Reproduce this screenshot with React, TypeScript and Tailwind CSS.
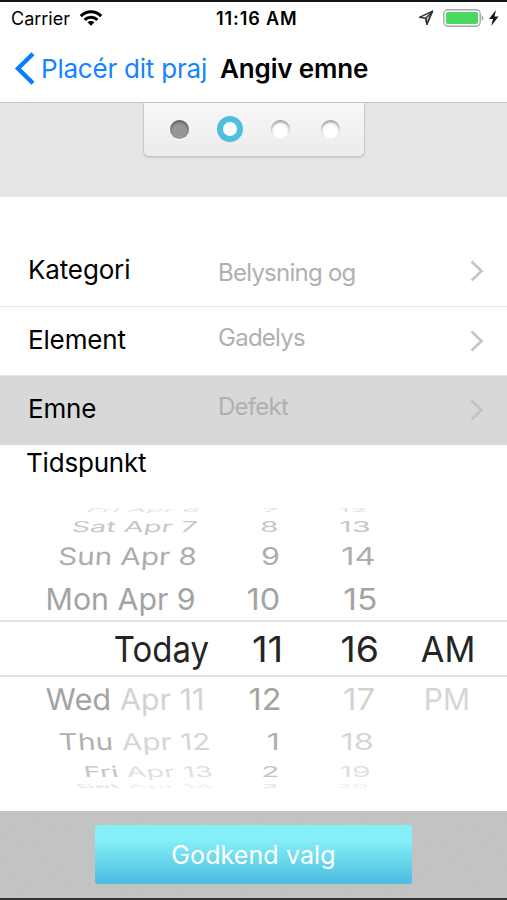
import React, { useState } from "react";

type Cell = { text: React.ReactNode; className: string };

type WheelRow = {
  row: string;
  day: Cell;
  hour: Cell;
  minute: Cell;
  period?: Cell;
};

// rows get flatter and lighter the further they are from the selected one
const wheelRows: WheelRow[] = [
  {
    row: "h-[14px] text-[26px] text-[#e2e2e2]",
    day: { text: "Fri Apr 6", className: "mr-[10px] -skew-x-12 scale-x-[1.07] scale-y-[0.2]" },
    hour: { text: "7", className: "mr-[5px] scale-x-[1.1] scale-y-[0.2]" },
    minute: { text: "12", className: "mr-[12px] scale-x-[1.1] scale-y-[0.2]" },
  },
  {
    row: "h-[18px] text-[27px] text-[#c6c6c6]",
    day: { text: "Sat Apr 7", className: "mr-[12px] -skew-x-6 scale-x-[1.07] scale-y-[0.56]" },
    hour: { text: "8", className: "mr-[5px] scale-x-[1.12] scale-y-[0.56]" },
    minute: { text: "13", className: "mr-[8px] scale-x-[1.14] scale-y-[0.56]" },
  },
  {
    row: "h-[42px] text-[29px] text-[#adadad]",
    day: { text: "Sun Apr 8", className: "mr-[12px] -skew-x-3 scale-x-[1.02] scale-y-[0.83]" },
    hour: { text: "9", className: "mr-[4px] scale-x-[1.05] scale-y-[0.83]" },
    minute: { text: "14", className: "mr-[3px] scale-x-[1.12] scale-y-[0.83]" },
  },
  {
    row: "h-[43px] text-[30px] text-[#a3a3a3]",
    day: { text: "Mon Apr 9", className: "mr-[13px] scale-x-[1.01]" },
    hour: { text: "10", className: "mr-[4px] scale-x-[1.08]" },
    minute: { text: "15", className: "mr-[2px] scale-x-[1.12]" },
  },
  {
    row: "h-[57px] border-y-2 border-[#e3e3e3] text-[36px] text-[#252525]",
    day: { text: "Today", className: "scale-x-[0.915]" },
    hour: { text: "11", className: "mr-px scale-x-[1.07]" },
    minute: { text: "16", className: "scale-x-[1.04]" },
    period: { text: "AM", className: "mr-px scale-x-[0.95]" },
  },
  {
    row: "h-[44px] text-[30px] text-[#a3a3a3]",
    day: { text: <>Wed <span className="text-[#d3d3d3]">Apr 11</span></>, className: "mr-[4px] skew-x-1 scale-x-[1.02]" },
    hour: { text: "12", className: "mr-[3px] scale-x-[1.08]" },
    minute: { text: "17", className: "mr-[4px] scale-x-[1.1] text-[#d3d3d3]" },
    period: { text: "PM", className: "mr-[6px] text-[#d6d6d6]" },
  },
  {
    row: "h-[40px] text-[29px] text-[#b0b0b0]",
    day: { text: <>Thu <span className="text-[#d6d6d6]">Apr 12</span></>, className: "mr-[-1px] skew-x-3 scale-x-[1.03] scale-y-[0.8]" },
    hour: { text: "1", className: "mr-[4px] scale-x-[1.1] scale-y-[0.8]" },
    minute: { text: "18", className: "mr-[5px] scale-x-[1.12] scale-y-[0.8] text-[#d6d6d6]" },
  },
  {
    row: "h-[20px] text-[27px] text-[#c4c4c4]",
    day: { text: <>Fri <span className="text-[#e0e0e0]">Apr 13</span></>, className: "mr-[-3px] skew-x-6 scale-x-[1.07] scale-y-[0.55]" },
    hour: { text: "2", className: "mr-[5px] scale-x-[1.1] scale-y-[0.55]" },
    minute: { text: "19", className: "mr-[8px] scale-x-[1.12] scale-y-[0.55] text-[#e0e0e0]" },
  },
  {
    row: "h-[10px] text-[26px] text-[#e0e0e0]",
    day: { text: <>Sat <span className="text-[#f0f0f0]">Apr 14</span></>, className: "mr-[-3px] skew-x-12 scale-x-[1.09] scale-y-[0.2]" },
    hour: { text: "3", className: "mr-[6px] scale-x-[1.05] scale-y-[0.2]" },
    minute: { text: "20", className: "mr-[10px] scale-y-[0.2] text-[#f0f0f0]" },
  },
];

const fields = [
  { label: "Kategori", value: "Belysning og", rowClass: "h-[70px]", valueClass: "pt-[3px]" },
  { label: "Element", value: "Gadelys", rowClass: "h-[69px]", valueClass: "pb-[6px]" },
  { label: "Emne", value: "Defekt", rowClass: "h-[69px]", valueClass: "pb-[6px]" },
];

const WheelCell = ({ cell, width }: { cell?: Cell; width: string }) => (
  <div className={`flex shrink-0 justify-end ${width}`}>
    {cell && <span className={`block origin-right whitespace-pre ${cell.className}`}>{cell.text}</span>}
  </div>
);

const StatusBar = () => (
  <div className="flex h-[34px] items-center border-t-2 border-[#161616] pt-px text-[18px] leading-none">
    <span className="w-[69px] shrink-0 pl-[11px]">Carrier</span>
    <svg className="mb-[2px] ml-[10px] shrink-0" width="24" height="16" viewBox="0 0 24 16" fill="none" stroke="#000" strokeWidth="3">
      <path d="M1.8 6.1C7.4.4 16.6.4 22.2 6.1" />
      <path d="M5.6 9.9c3.6-3.6 9.2-3.6 12.8 0" />
      <path d="M12 15.7l-3.5-3.4c2-1.9 5-1.9 7 0z" fill="#000" stroke="none" />
    </svg>
    <span className="ml-[113px] w-[86px] font-semibold tracking-[0.9px] whitespace-nowrap">11:16 AM</span>
    <svg className="mb-[2px] ml-auto shrink-0" width="16" height="16" viewBox="0 0 16 16" fill="none" stroke="#333" strokeWidth="1.4" strokeLinejoin="round">
      <path d="M14.5 1.2L1.5 7.3l6.2 1 1.2 6z" />
      <path d="M14.5 1.2L7.7 8.3l1.2 6z" fill="#333" fillOpacity=".25" />
    </svg>
    <svg className="mr-[8px] mb-[2px] ml-[9px] shrink-0" width="56" height="18" viewBox="0 0 56 18">
      <rect x=".8" y=".8" width="36.4" height="16.4" rx="4" fill="#fff" stroke="#a6a6a6" strokeWidth="1.4" />
      <rect x="3" y="3" width="32" height="12" rx="1.8" fill="#4bd763" />
      <path d="M38.7 6.3c2.3.9 2.3 4.5 0 5.4z" fill="#a6a6a6" />
      <path d="M53 1l-7 9h4l-1.8 7 7.3-9.500h-4.100z" fill="#111" />
    </svg>
  </div>
);

const StepTab = () => (
  <div className="flex h-[54px] w-[222px] items-center justify-between rounded-b-[6px] border border-t-0 border-[#c9c9c9] bg-linear-to-b from-[#f8f8f8] to-[#ebebeb] pr-[20px] pb-px pl-[23px] shadow-[0_1px_1px_rgba(0,0,0,0.12)]">
    <span className="mx-[3px] size-[19px] rounded-full bg-[#969696] shadow-[inset_0_2px_3px_rgba(0,0,0,0.4),0_1px_0_#fff]" />
    <span className="size-[26px] rounded-full border-[6.5px] border-[#4fbfdf] bg-white" />
    <span className="mx-[3px] size-[19px] rounded-full bg-white shadow-[inset_0_2px_3px_rgba(0,0,0,0.42)]" />
    <span className="mx-[3px] size-[19px] rounded-full bg-white shadow-[inset_0_2px_3px_rgba(0,0,0,0.42)]" />
  </div>
);

const App = () => {
  const [selected, setSelected] = useState(2);

  return (
    <div className="flex h-[900px] w-[507px] flex-col overflow-hidden bg-white font-['Inter',sans-serif] text-black">
      <StatusBar />

      {/* Navigation bar */}
      <div className="flex h-[69px] items-center border-b border-[#c4c4c4] pt-px text-[26px] leading-none">
        <svg className="ml-[14px] shrink-0" width="21" height="33" viewBox="0 0 21 33" fill="none" stroke="#087dff" strokeWidth="4.4">
          <path d="M19 1.8L4 16.5 19 31.2" />
        </svg>
        <span className="ml-[6px] w-[179px] tracking-[-0.22px] whitespace-nowrap text-[#1683ff]">Placér dit praj</span>
        <h1 className="font-semibold tracking-[-0.15px] whitespace-nowrap">Angiv emne</h1>
      </div>

      {/* Step indicator */}
      <div className="flex h-[94px] items-start justify-center bg-[#e5e5e5]">
        <StepTab />
      </div>

      {/* Fields */}
      <div className="pt-[40px]">
        {fields.map((field, i) => (
          <button
            key={field.label}
            onClick={() => setSelected(i)}
            className={`flex w-full items-center border-b text-left leading-none ${field.rowClass} ${
              selected === i ? "border-[#d8d8d8] bg-[#d8d8d8]" : "border-[#e6e6e6]"
            }`}
          >
            <span className="w-[218px] pb-[3px] pl-[28px] text-[26px] tracking-[-0.15px]">{field.label}</span>
            <span className={`grow text-[24px] tracking-[-0.75px] text-[#b0b0b0] ${field.valueClass}`}>{field.value}</span>
            <svg className="mr-[23px] mb-px" width="14" height="22" viewBox="0 0 14 22" fill="none" stroke={selected === i ? "#c2c2c2" : "#c5c5c9"} strokeWidth="2.6">
              <path d="M1.5 1.5L11.5 11l-10 9.5" />
            </svg>
          </button>
        ))}
      </div>

      <h2 className="h-[58px] pt-[4px] pl-[26px] text-[26px] leading-[28px] tracking-[-0.2px]">Tidspunkt</h2>

      {/* Date wheel */}
      <div className="h-[308px]">
        {wheelRows.map((r, i) => (
          <div key={i} className={`flex items-center leading-none ${r.row}`}>
            <WheelCell cell={r.day} width="w-[209px]" />
            <WheelCell cell={r.hour} width="w-[75px]" />
            <WheelCell cell={r.minute} width="w-[95px]" />
            <WheelCell cell={r.period} width="w-[97px]" />
          </div>
        ))}
      </div>

      {/* Footer */}
      <div className="flex grow items-center justify-center border-b-2 border-[#333] bg-[#c4c4c4] bg-[repeating-linear-gradient(25deg,transparent_0_2px,rgba(0,0,0,0.01)_2px_4px)]">
        <button className="h-[59px] w-[317px] rounded-[3px] bg-linear-to-b from-[#85eff8] from-25% to-[#4abce0] pt-[2px] text-[25px] tracking-[0.1px] text-white">
          Godkend valg
        </button>
      </div>
    </div>
  );
};

export default App;
